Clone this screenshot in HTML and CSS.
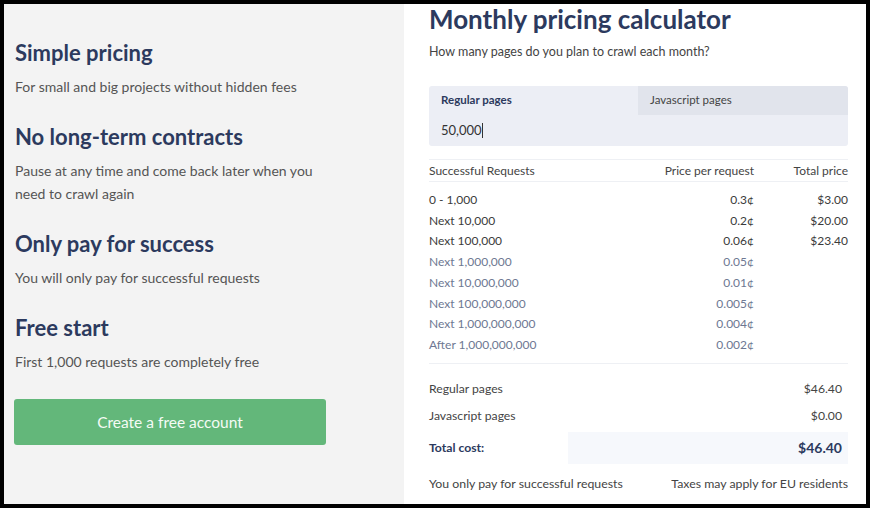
FILE: index.html
```html
<!DOCTYPE html>
<html>
<head>
<meta charset="utf-8">
<link rel="stylesheet" href="styles.css">
</head>
<body>
<div class="frame">
  <div class="left">
    <div class="feature">
      <h2>Simple pricing</h2>
      <p>For small and big projects without hidden fees</p>
    </div>
    <div class="feature">
      <h2>No long-term contracts</h2>
      <p>Pause at any time and come back later when you<br>need to crawl again</p>
    </div>
    <div class="feature">
      <h2>Only pay for success</h2>
      <p>You will only pay for successful requests</p>
    </div>
    <div class="feature">
      <h2>Free start</h2>
      <p>First 1,000 requests are completely free</p>
    </div>
    <button class="cta">Create a free account</button>
  </div>
  <div class="right">
    <h1>Monthly pricing calculator</h1>
    <p class="question">How many pages do you plan to crawl each month?</p>
    <div class="input-box">
      <div class="tabs">
        <div class="tab active">Regular pages</div>
        <div class="tab">Javascript pages</div>
      </div>
      <div class="value">50,000<span class="caret"></span></div>
    </div>
    <div class="table">
      <div class="row head">
        <span>Successful Requests</span><span class="num">Price per request</span><span class="num">Total price</span>
      </div>
      <div class="body">
        <div class="row"><span>0 - 1,000</span><span class="num">0.3¢</span><span class="num">$3.00</span></div>
        <div class="row"><span>Next 10,000</span><span class="num">0.2¢</span><span class="num">$20.00</span></div>
        <div class="row"><span>Next 100,000</span><span class="num">0.06¢</span><span class="num">$23.40</span></div>
        <div class="row dim"><span>Next 1,000,000</span><span class="num">0.05¢</span><span class="num"></span></div>
        <div class="row dim"><span>Next 10,000,000</span><span class="num">0.01¢</span><span class="num"></span></div>
        <div class="row dim"><span>Next 100,000,000</span><span class="num">0.005¢</span><span class="num"></span></div>
        <div class="row dim"><span>Next 1,000,000,000</span><span class="num">0.004¢</span><span class="num"></span></div>
        <div class="row dim"><span>After 1,000,000,000</span><span class="num">0.002¢</span><span class="num"></span></div>
      </div>
    </div>
    <div class="summary">
      <div class="sum-row"><span>Regular pages</span><span>$46.40</span></div>
      <div class="sum-row"><span>Javascript pages</span><span>$0.00</span></div>
      <div class="sum-row total"><span class="label">Total cost:</span><span class="amount">$46.40</span></div>
    </div>
    <div class="foot">
      <span>You only pay for successful requests</span><span>Taxes may apply for EU residents</span>
    </div>
  </div>
</div>
</body>
</html>
```
FILE: styles.css
```css
* { box-sizing: border-box; }
html, body { margin: 0; padding: 0; }
body {
  font-family: "Lato", "Open Sans", sans-serif;
  background: #000;
}
.frame {
  width: 870px;
  height: 508px;
  border: 4px solid #000;
  display: flex;
  background: #fff;
  overflow: hidden;
}
.left {
  width: 400px;
  background: #f3f3f3;
  padding: 36px 0 0 10px;
}
.feature { padding-left: 1px; }
.feature h2 {
  margin: 0;
  font-size: 22px;
  font-weight: 700;
  color: #2c3a5e;
  line-height: 26px;
}
.feature p {
  margin: 9px 0 26px;
  font-size: 14px;
  line-height: 23px;
  color: #555;
}
.cta {
  display: block;
  width: 312px;
  height: 46px;
  margin-top: 10px;
  border: 0;
  border-radius: 3px;
  background: #63b77a;
  color: #f4fbf5;
  font-family: inherit;
  font-size: 15.5px;
}
.right {
  flex: 1;
  padding: 0 18px 0 25px;
}
h1 {
  margin: 0;
  font-size: 26px;
  line-height: 30px;
  color: #2c3a5e;
  font-weight: 700;
}
.question {
  margin: 10px 0 0;
  font-size: 12.5px;
  line-height: 16px;
  color: #444;
}
.input-box {
  margin-top: 26px;
  background: #eceef5;
  border-radius: 3px;
  height: 60px;
}
.tabs {
  display: flex;
  height: 29px;
}
.tab {
  flex: 0 0 209px;
  padding: 7px 0 0 12px;
  font-size: 11.5px;
  color: #444;
}
.tab.active { font-weight: 700; color: #2c3a5e; }
.tab + .tab { flex: 1; background: #e1e4ec; border-top-right-radius: 3px; }
.value {
  padding: 7px 0 0 12px;
  font-size: 13px;
  color: #333;
  display: flex;
  align-items: center;
}
.caret {
  display: inline-block;
  width: 1px;
  height: 15px;
  background: #333;
}
.table { margin-top: 13px; }
.row {
  display: grid;
  grid-template-columns: 1fr 150px 94px;
  font-size: 12px;
  line-height: 20.7px;
  color: #3b3b3b;
}
.row .num { text-align: right; }
.row.head {
  border-top: 1px solid #eef0f4;
  border-bottom: 1px solid #eef0f4;
  line-height: 21px;
  color: #444;
}
.body {
  padding: 8px 0 7px;
  border-bottom: 1px solid #eef0f4;
}
.row.dim { color: #6e7892; }
.summary { padding-top: 11px; }
.sum-row {
  display: flex;
  justify-content: space-between;
  font-size: 12.2px;
  line-height: 27px;
  color: #444;
  padding-right: 6px;
}
.sum-row.total {
  height: 32px;
  align-items: center;
  font-weight: 700;
  color: #2c3a5e;
  padding-right: 6px;
  background: linear-gradient(to right, transparent 139px, #f6f8fc 139px);
  margin-top: 3px;
}
.sum-row.total .amount { font-size: 14px; }
.foot {
  display: flex;
  justify-content: space-between;
  font-size: 12.3px;
  color: #444;
  margin-top: 12px;
}
```
